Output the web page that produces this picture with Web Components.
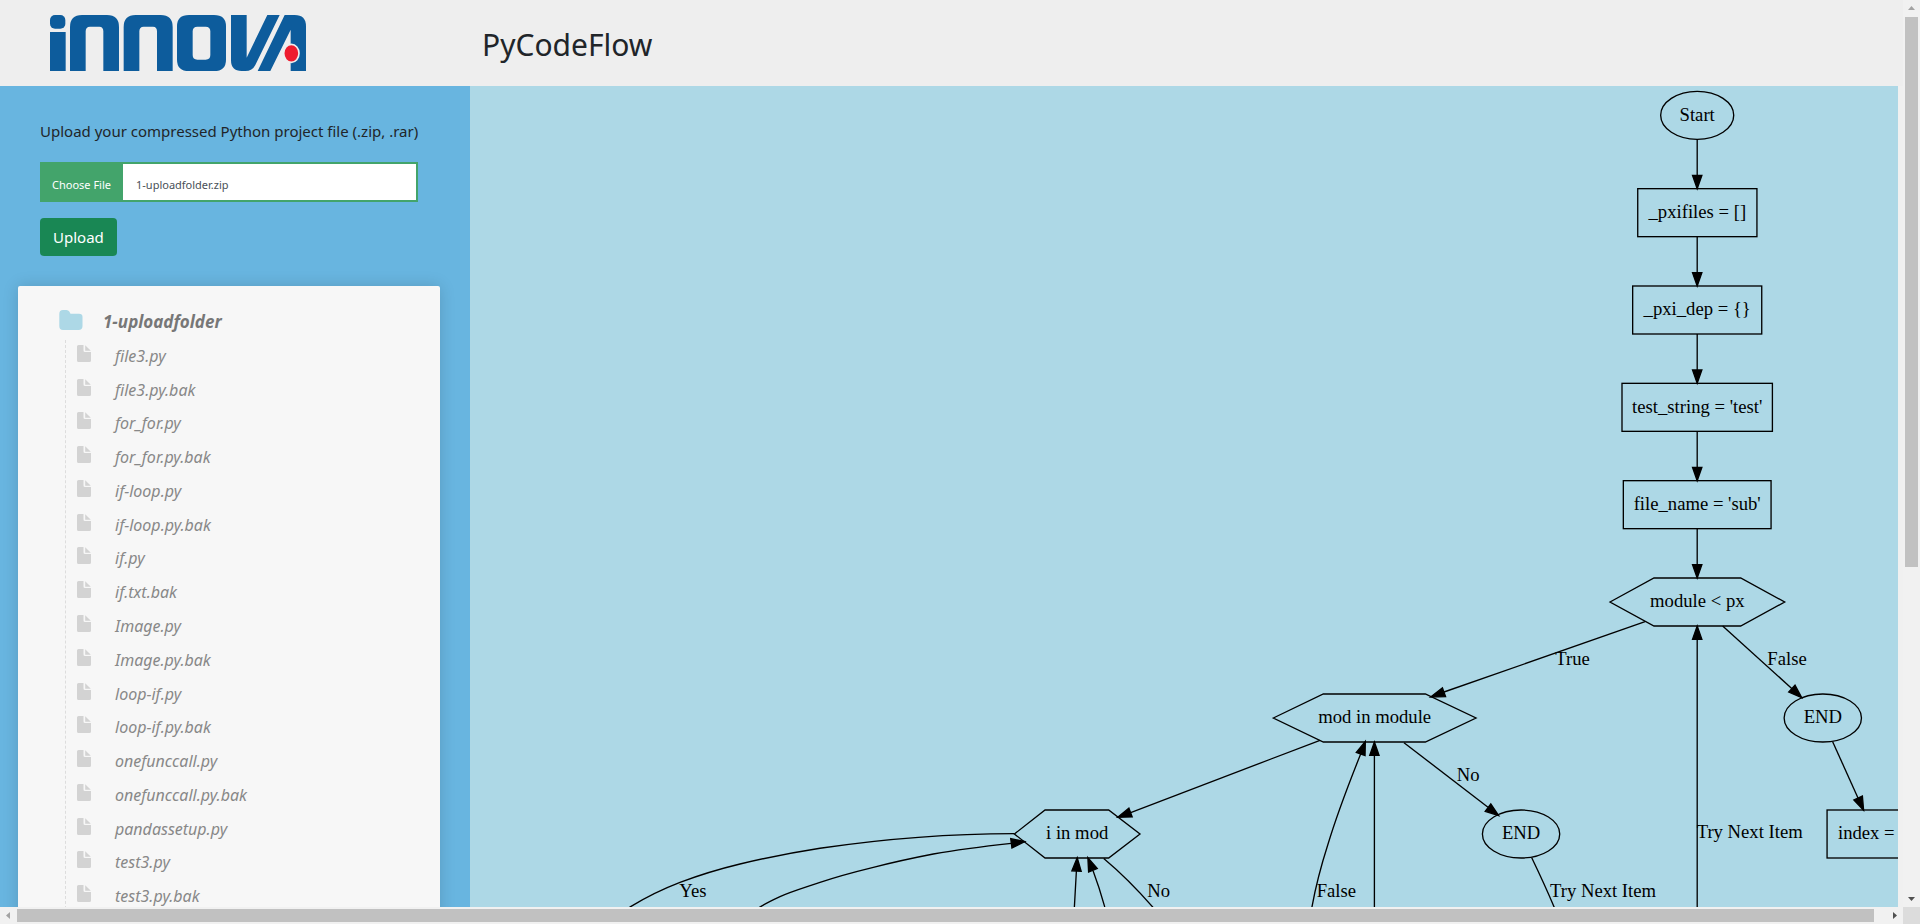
<!DOCTYPE html>
<html lang="en">
<head>
<meta charset="utf-8">
<title>PyCodeFlow</title>
<style>
  html, body { margin: 0; height: 100%; }
  body { overflow: hidden; background: #f0f0f0; color: #212529; font-family: "Noto Sans", "Open Sans", sans-serif; font-size: 15px; }
</style>
</head>
<body>
<pcf-app>
  <site-header slot="header">PyCodeFlow</site-header>
  <upload-form slot="side">Upload your compressed Python project file (.zip, .rar)</upload-form>
  <file-tree slot="side" name="1-uploadfolder">
    <file-item>file3.py</file-item>
    <file-item>file3.py.bak</file-item>
    <file-item>for_for.py</file-item>
    <file-item>for_for.py.bak</file-item>
    <file-item>if-loop.py</file-item>
    <file-item>if-loop.py.bak</file-item>
    <file-item>if.py</file-item>
    <file-item>if.txt.bak</file-item>
    <file-item>Image.py</file-item>
    <file-item>Image.py.bak</file-item>
    <file-item>loop-if.py</file-item>
    <file-item>loop-if.py.bak</file-item>
    <file-item>onefunccall.py</file-item>
    <file-item>onefunccall.py.bak</file-item>
    <file-item>pandassetup.py</file-item>
    <file-item>test3.py</file-item>
    <file-item>test3.py.bak</file-item>
  </file-tree>
  <flow-chart slot="main"></flow-chart>
</pcf-app>

<script>
function define(name, html, ready) {
  const template = document.createElement('template');
  template.innerHTML = html;
  customElements.define(name, class extends HTMLElement {
    constructor() {
      super();
      this.attachShadow({ mode: 'open' }).append(template.content.cloneNode(true));
    }
    connectedCallback() { if (ready) ready(this, this.shadowRoot); }
  });
}

define('scroll-rail', `
  <style>
    :host { display: flex; background: #f1f1f1; }
    :host([axis="y"]) { flex-direction: column; }
    .end { flex: 0 0 17px; display: grid; place-items: center; }
    .end svg { display: block; width: 7px; height: 7px; }
    .track { flex: 1; display: flex; padding: 2px 0; }
    .thumb { background: #c1c1c1; flex: 0 0 var(--thumb, 50%); }
    :host([axis="y"]) .track { flex-direction: column; padding: 0 2px; }
    :host([axis="y"]) svg { transform: rotate(90deg); }
  </style>
  <div class="end"><svg viewBox="0 0 7 7"><path fill="#a3a3a3" d="M5 0v7L1 3.5z"/></svg></div>
  <div class="track"><div class="thumb"></div></div>
  <div class="end"><svg viewBox="0 0 7 7"><path fill="#505050" d="M2 0v7l4-3.500z"/></svg></div>
`);

define('pcf-app', `
  <style>
    :host { display: grid; height: 100vh; grid-template: minmax(0, 1fr) 17px / minmax(0, 1fr) 17px; }
    .page { display: grid; grid-template-rows: 86px minmax(0, 1fr); overflow: hidden; }
    .body { display: grid; grid-template-columns: 470px minmax(0, 1fr); padding-right: 5px; overflow: hidden; }
    aside { background: #68b5e0; overflow: hidden; }
    main { background: #add8e6; overflow: hidden; }
    .down { --thumb: 63%; }
    .across { --thumb: 99.36%; }
    .corner { background: #dcdcdc; }
  </style>
  <div class="page">
    <slot name="header"></slot>
    <div class="body">
      <aside><slot name="side"></slot></aside>
      <main><slot name="main"></slot></main>
    </div>
  </div>
  <scroll-rail class="down" axis="y"></scroll-rail>
  <scroll-rail class="across" axis="x"></scroll-rail>
  <div class="corner"></div>
`);

define('innova-logo', `
  <style>
    :host { display: block; }
    svg { display: block; width: 256px; height: 56px; }
  </style>
  <svg viewBox="30 21 768 168" role="img" aria-label="Innova" fill="#0d5c9c">
    <rect x="30" y="21" width="46" height="41" rx="15"/>
    <rect x="30" y="72" width="47" height="117"/>
    <path id="arch" d="M90 189V57Q90 21 126 21H201Q237 21 237 57V189H190V70Q190 56 178 56H150Q137 56 137 70V189Z"/>
    <use href="#arch" x="161"/>
    <path fill-rule="evenodd" d="M447 21H522Q558 21 558 55V155Q558 189 522 189H447Q411 189 411 155V55Q411 21 447 21ZM472 56Q458 56 458 70V141Q458 155 472 155H497Q511 155 511 141V70Q511 56 497 56Z"/>
    <path d="M573 21H620V149L682 21H719L646 171Q637 189 616 189H605Q573 189 573 157Z"/>
    <path d="M653 189L734 21H764Q798 21 798 55V189H752V65L691 189Z"/>
    <ellipse cx="754" cy="136" rx="23" ry="27" fill="#ee1c2e" stroke="#eee" stroke-width="5"/>
  </svg>
`);

define('site-header', `
  <style>
    :host { display: flex; align-items: center; background: #eee; }
    .brand { flex: 0 0 432px; padding-left: 50px; }
    h1 { margin: 0; font-size: 30px; line-height: 36px; font-weight: 400; padding-top: 4px; }
  </style>
  <div class="brand"><innova-logo></innova-logo></div>
  <h1><slot></slot></h1>
`);

define('upload-form', `
  <style>
    :host { display: block; padding: 33px 52px 30px 40px; }
    form { display: grid; gap: 16px; justify-items: start; }
    p { margin: 0; line-height: 24px; padding-bottom: 3px; white-space: nowrap; }
    .field { position: relative; display: flex; box-sizing: border-box; width: 100%; height: 40px; border: 2px solid #43a46b; background: #fff; color: #495057; font-size: 11px; line-height: 16px; }
    .pick { display: grid; place-items: center; width: 81px; padding: 6px 2px 0 0; box-sizing: border-box; background: #43a46b; color: #fff; }
    .chosen { align-self: center; padding: 6px 0 0 13px; }
    input { position: absolute; inset: 0; width: 100%; height: 100%; opacity: 0; }
    button { font: inherit; line-height: 24px; height: 38px; padding: 0 13px; border: 0; border-radius: 4px; background: #198754; color: #fff; }
  </style>
  <form>
    <p><slot></slot></p>
    <label class="field">
      <span class="pick">Choose File</span>
      <span class="chosen">1-uploadfolder.zip</span>
      <input type="file" accept=".zip,.rar">
    </label>
    <button type="button">Upload</button>
  </form>
`, (host, root) => {
  root.querySelector('input').addEventListener('change', e => {
    if (e.target.files[0]) root.querySelector('.chosen').textContent = e.target.files[0].name;
  });
});

define('file-item', `
  <style>
    :host { display: flex; align-items: center; gap: 24px; }
    svg { display: block; width: 14px; height: 17px; margin-bottom: 7px; }
    a { margin-bottom: 2px; color: #888; font-size: 16px; line-height: 24px; font-style: italic; text-decoration: none; }
  </style>
  <svg viewBox="0 0 14 17" fill="#d3d3d3" aria-hidden="true"><path d="M1.500 0H6.500V5.500Q6.500 7 8 7H14V15.500Q14 17 12.500 17H1.500Q0 17 0 15.500V1.500Q0 0 1.500 0ZM8.200 .2L13.800 5.800H8.200Z"/></svg>
  <a href="#"><slot></slot></a>
`);

define('file-tree', `
  <style>
    :host { display: block; margin: 0 30px 0 18px; padding: 20px 0 200px 41px; background: #f7f7f7; border-radius: 2px; box-shadow: 0 0 16px rgba(0, 0, 0, .15); }
    .root { display: flex; align-items: center; gap: 20px; height: 34px; }
    .root svg { display: block; width: 24px; height: 20px; margin-bottom: 6px; }
    .root a { margin-bottom: 2px; color: #777; font-size: 17px; line-height: 24px; font-weight: 700; font-style: italic; text-decoration: none; }
    .items { display: grid; grid-auto-rows: 1fr; height: 574px; margin-left: 6px; padding-left: 11px; border-left: 1px dashed #ddd; }
  </style>
  <div class="root">
    <svg viewBox="0 0 24 20" fill="#add8e6" aria-hidden="true"><path d="M4 0H7.500Q9.300 0 10.300 1.500L11.500 3.700H20Q23.500 3.700 23.500 7V16Q23.500 20 19.500 20H4Q.3 20 .3 16V4Q.3 0 4 0Z"/></svg>
    <a href="#"></a>
  </div>
  <div class="items"><slot></slot></div>
`, (host, root) => { root.querySelector('.root a').textContent = host.getAttribute('name'); });

/* Graph data in points, drawn at 4/3 pixels to the point. */
const AXIS = 920.4;
const nodes = [
  ['oval', AXIS, 22, 27.4, 'Start'],
  ['box', 875.8, 965.2, 95, '_pxifiles = []'],
  ['box', 872, 968.8, 168, '_pxi_dep = {}'],
  ['box', 864, 976.8, 241, "test_string = 'test'"],
  ['box', 865, 975.8, 314, "file_name = 'sub'"],
  ['hex', 855, 888, 953, 986, 387, 'module < px'],
  ['hex', 602.5, 640, 716.5, 754.5, 474, 'mod in module'],
  ['oval', 1014.6, 474, 29, 'END'],
  ['hex', 408.3, 431.3, 479, 502.5, 561, 'i in mod'],
  ['oval', 788.3, 561, 29, 'END']
];
/* path, then arrow tip and arrow base */
const edges = [
  ...[40, 113, 186, 259, 332].map(y => [`M${AXIS} ${y}V${y + 27}`, AXIS, y + 37, AXIS, y + 27]),
  ['M881.3 401.800L730.500 454.500', 720.5, 458.3, 730.5, 454.7],
  ['M939.500 405L991.500 452', 998.8, 458.8, 991.4, 452],
  ['M1022 491.800L1041 534', 1045.2, 543.2, 1041.1, 534],
  [`M${AXIS} 700V415`, AXIS, 405, AXIS, 415],
  ['M796.300 578.800Q806 599 813 615.500L830 660'],
  ['M700.500 492.500L763.500 541', 771.5, 547.2, 763.5, 541.2],
  ['M628 640C630 620 636 592 643.300 569.300C650 547 660 521 668 501', 671.5, 491.5, 668, 501],
  ['M678.300 700V502', 678.3, 492, 678.3, 502],
  ['M637.500 490.700L495.500 545', 485.8, 548.5, 495.4, 544.9],
  ['M452.500 640L453.300 615.500L454.800 588.500', 455.4, 578.8, 454.9, 588.8],
  ['M484 640L476 615.500Q472 601 467.300 588.500', 463.4, 578.8, 467.2, 588.2],
  ['M475.300 579.300Q494 595 511.800 615.500L530 638'],
  ['M408.300 560.700C357 560.700 308 565 262.500 571.700C240 575.200 222 578.800 202.500 583.500C188 587 172 591.800 157.500 597.300C144 602.500 131 609 120.500 615.500L90 635'],
  ['M406 568C385 570.300 366 572.700 347.500 576C332 579 317 582.300 302.500 586C289 589.300 275 593 262.500 597.300C250 601.500 240 604.500 232.500 608C226 611 222 613 218 615.500L190 632', 416, 566.7, 406, 568]
];
const labels = [
  [814, 434, 'True'], [973, 434, 'False'], [740, 521, 'No'], [920, 564, 'Try Next Item'],
  [157, 608, 'Yes'], [508, 608, 'No'], [635, 608, 'False'], [810, 608, 'Try Next Item'],
  [1026, 565, 'index =']
];

function drawNode(n) {
  const caption = (x, y, s) => `<text x="${x}" y="${y + 4}" text-anchor="middle">${s.replace('<', '&lt;')}</text>`;
  if (n[0] === 'oval') return `<ellipse cx="${n[1]}" cy="${n[2]}" rx="${n[3]}" ry="18"/>` + caption(n[1], n[2], n[4]);
  if (n[0] === 'box') return `<rect x="${n[1]}" y="${n[3] - 18}" width="${n[2] - n[1]}" height="36"/>` + caption((n[1] + n[2]) / 2, n[3], n[4]);
  const [, a, b, c, d, y, s] = n;
  return `<path d="M${a} ${y}L${b} ${y - 18}H${c}L${d} ${y}L${c} ${y + 18}H${b}Z"/>` + caption((a + d) / 2, y, s);
}

function drawEdge([d, tx, ty, bx, by]) {
  let out = `<path d="${d}"/>`;
  if (tx !== undefined) {
    const len = Math.hypot(tx - bx, ty - by);
    const ux = (tx - bx) / len * 3.5, uy = (ty - by) / len * 3.5;
    out += `<path fill="#000" stroke="#000" d="M${tx} ${ty}L${bx - uy} ${by + ux}L${bx + uy} ${by - ux}Z"/>`;
  }
  return out;
}

define('flow-chart', `
  <style>
    :host { display: block; }
    svg { display: block; width: 1600px; height: 900px; fill: none; stroke: #000; }
    text { fill: #000; stroke: none; font: 14px "Liberation Serif", "Times New Roman", serif; }
  </style>
  <svg viewBox="0 0 1200 675" role="img" aria-label="Flow chart">
    ${nodes.map(drawNode).join('')}
    <rect x="1017.8" y="543" width="80" height="36"/>
    ${edges.map(drawEdge).join('')}
    ${labels.map(([x, y, s]) => `<text x="${x}" y="${y}">${s}</text>`).join('')}
  </svg>
`);
</script>
</body>
</html>
